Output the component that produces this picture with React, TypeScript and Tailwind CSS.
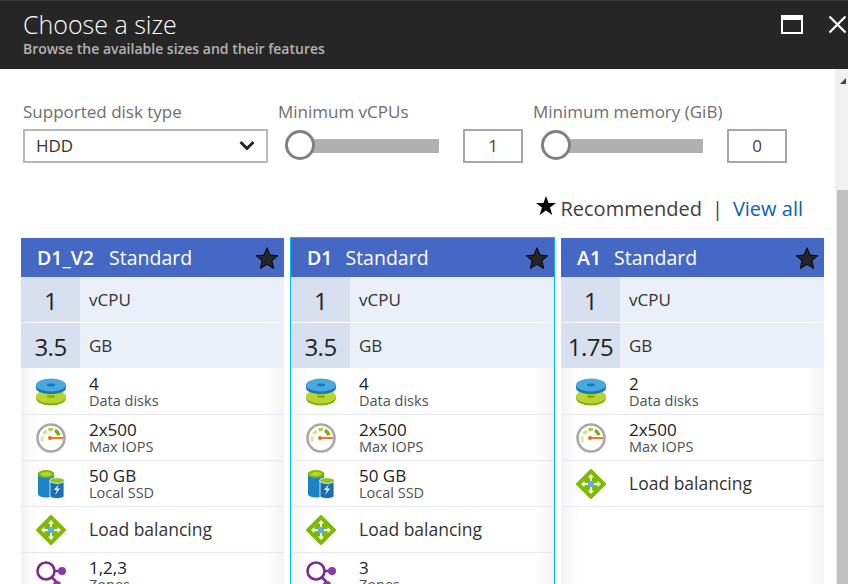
const font = { fontFamily: '"Open Sans", "Noto Sans", sans-serif' };

const DiskIcon = () => (
  <svg width="30" height="28" viewBox="0 0 30 28">
    <ellipse cx="15" cy="20" rx="15" ry="7.500" fill="#7fb000" />
    <ellipse cx="15" cy="18.500" rx="15" ry="7" fill="#b8d432" />
    <ellipse cx="15" cy="18.500" rx="4" ry="1.400" fill="#7fb000" />
    <path d="M0 7v3c0 3.500 6.700 6 15 6s15-2.500 15-6V7z" fill="#1277bd" />
    <ellipse cx="15" cy="7" rx="15" ry="6.500" fill="#4aa8dc" />
    <ellipse cx="15" cy="7" rx="4" ry="1.400" fill="#1277bd" />
  </svg>
);

const GaugeIcon = () => (
  <svg width="30" height="30" viewBox="0 0 30 30">
    <circle cx="15" cy="15" r="13.500" fill="#fff" stroke="#a8a8a8" strokeWidth="2.600" />
    <path d="M6.500 19a8.800 8.800 0 0 1 0-6" fill="none" stroke="#dcebb8" strokeWidth="3.400" />
    <path d="M7.500 11a8.800 8.800 0 0 1 3.500-3" fill="none" stroke="#cfe39a" strokeWidth="3.400" />
    <path d="M12.500 6.800a8.800 8.800 0 0 1 4.500-.2" fill="none" stroke="#a9cc4a" strokeWidth="3.400" />
    <path d="M19 7.200a8.800 8.800 0 0 1 4 5" fill="none" stroke="#7fa800" strokeWidth="3.400" />
    <path d="M13 15h14" stroke="#ea6c0c" strokeWidth="1.800" />
    <circle cx="14" cy="15" r="2" fill="#ea6c0c" />
  </svg>
);

const SsdIcon = () => (
  <svg width="30" height="30" viewBox="0 0 30 30">
    <path d="M2 5v20c0 2 4 3.500 8 3.500s8-1.500 8-3.500V5z" fill="#1c83c6" />
    <ellipse cx="10" cy="5" rx="8.500" ry="4" fill="#7fba00" />
    <ellipse cx="10" cy="5" rx="5.500" ry="2.200" fill="#b8d432" />
    <path d="M14 12h14v15c0 1.500-3 2.500-7 2.500s-7-1-7-2.500z" fill="#1a6fb3" stroke="#fff" strokeWidth="0.800" />
    <ellipse cx="21" cy="11.500" rx="7.500" ry="2.800" fill="#8fc31f" stroke="#fff" strokeWidth="0.800" />
    <path d="M23 15l-5 6h3l-2 5 5-6.500h-3z" fill="#fff" />
  </svg>
);

const BalanceIcon = () => (
  <svg width="30" height="30" viewBox="0 0 30 30">
    <path d="M15 1.500L28.500 15 15 28.500 1.500 15z" fill="#7fba00" stroke="#7fba00" strokeWidth="3" strokeLinejoin="round" />
    <path d="M15 5l3 3.500h-2v5h-2v-5h-2zM15 25l3-3.500h-2v-5h-2v5h-2zM5 15l3.500-3v2h5v2h-5v2zM25 15l-3.500-3v2h-5v2h5v2z" fill="#fff" />
    <circle cx="15" cy="15" r="3.200" fill="#59b4d9" />
  </svg>
);

const ZonesIcon = () => (
  <svg width="30" height="30" viewBox="0 0 30 30">
    <circle cx="10" cy="10" r="8.500" fill="#fff" stroke="#7a2a90" strokeWidth="2.600" />
    <path d="M18 10h6M15.500 16l6 6" stroke="#7a2a90" strokeWidth="2.600" />
    <circle cx="26" cy="10" r="4" fill="#8a3aa0" />
    <circle cx="21" cy="24" r="4" fill="#8a3aa0" />
  </svg>
);

const Star = () => (
  <svg width="24" height="24" viewBox="0 0 24 24" className="shrink-0">
    <path d="M12 1.800l3 7.300 7.800.6-6 5.100 1.900 7.600-6.700-4.100-6.700 4.100 1.900-7.600-6-5.100 7.800-.6z" fill="#262626" stroke="#000" strokeWidth="1" />
  </svg>
);

type Feature = { icon: React.ReactNode; value: string; label?: string };

type Size = { name: string; nameClass: string; cpu: string; mem: string; features: Feature[]; selected?: boolean };

const sizes: Size[] = [
  {
    name: "D1_V2",
    nameClass: "font-semibold mr-[15px]",
    cpu: "1",
    mem: "3.5",
    features: [
      { icon: <DiskIcon />, value: "4", label: "Data disks" },
      { icon: <GaugeIcon />, value: "2x500", label: "Max IOPS" },
      { icon: <SsdIcon />, value: "50 GB", label: "Local SSD" },
      { icon: <BalanceIcon />, value: "Load balancing" },
      { icon: <ZonesIcon />, value: "1,2,3", label: "Zones" },
    ],
  },
  {
    name: "D1",
    nameClass: "font-semibold mr-[13px]",
    cpu: "1",
    mem: "3.5",
    selected: true,
    features: [
      { icon: <DiskIcon />, value: "4", label: "Data disks" },
      { icon: <GaugeIcon />, value: "2x500", label: "Max IOPS" },
      { icon: <SsdIcon />, value: "50 GB", label: "Local SSD" },
      { icon: <BalanceIcon />, value: "Load balancing" },
      { icon: <ZonesIcon />, value: "3", label: "Zones" },
    ],
  },
  {
    name: "A1",
    nameClass: "font-semibold mr-[13px]",
    cpu: "1",
    mem: "1.75",
    features: [
      { icon: <DiskIcon />, value: "2", label: "Data disks" },
      { icon: <GaugeIcon />, value: "2x500", label: "Max IOPS" },
      { icon: <BalanceIcon />, value: "Load balancing" },
    ],
  },
];

const SpecRow = ({ value, unit }: { value: string; unit: string }) => (
  <div className="flex h-[45px] bg-[#eaeff8] mb-px">
    <div className="w-[59px] bg-[#d8e0f0] flex items-center justify-center pt-[2px] text-[24px] text-[#222] tracking-[-0.5px]">
      {value}
    </div>
    <div className="pl-[9px] pt-[11px] text-[17px] leading-[24px] text-[#333]">{unit}</div>
  </div>
);

const Card = ({ size }: { size: Size }) => (
  <div
    className={
      size.selected
        ? "w-[265px] border border-[#00bcf2] border-b-0 -mt-px bg-[linear-gradient(90deg,#f3f3f3,#fff_18px,#fff_calc(100%-18px),#f3f3f3)]"
        : "w-[263px] bg-[linear-gradient(90deg,#f3f3f3,#fff_18px,#fff_calc(100%-18px),#f3f3f3)]"
    }
  >
    <div className="h-[39px] bg-[#4668c5] flex items-center pl-4 pr-[5px] text-white text-[19.5px]">
      <span className={size.nameClass}>{size.name}</span>
      <span className="flex-1">Standard</span>
      <Star />
    </div>
    <SpecRow value={size.cpu} unit="vCPU" />
    <SpecRow value={size.mem} unit="GB" />
    {size.features.map((f) => (
      <div key={f.value + f.label} className="h-[46px] flex border-b border-[#e8e8f2]">
        <div className="w-[59px] pl-[15px] flex items-center shrink-0">{f.icon}</div>
        {f.label ? (
          <div className="pl-[9px] pt-[5px]">
            <div className="text-[17px] leading-[19px] text-[#222]">{f.value}</div>
            <div className="text-[14.5px] leading-[15px] text-[#505050]">{f.label}</div>
          </div>
        ) : (
          <div className="pl-[9px] pb-[1px] flex items-center text-[17.5px] text-[#333]">{f.value}</div>
        )}
      </div>
    ))}
  </div>
);

const Slider = ({ trackW, value }: { trackW: string; value: string }) => (
  <div className="flex items-center">
    <div className="relative h-[34px] flex items-center">
      <div className={"h-[14px] bg-[#b0b0b0] ml-[15px] " + trackW} />
      <div className="absolute left-0 top-[1px] w-[30px] h-[30px] rounded-full bg-white border-[3px] border-[#808080]" />
    </div>
    <div className="ml-6 w-[60px] h-[34px] border-2 border-[#a6a6a6] flex items-center justify-center pb-[1px] text-[17px] text-[#444]">
      {value}
    </div>
  </div>
);

export default function App() {
  return (
    <div className="h-[584px] w-[848px] overflow-hidden bg-white flex flex-col" style={font}>
      <header className="h-[69px] shrink-0 bg-[#262626] border-t border-[#3a3a3a] flex justify-between pl-[23px] pr-[1px]">
        <div>
          <h1 className="text-[25px] leading-[30px] mt-[8px] text-white font-light">Choose a size</h1>
          <p className="text-[14px] leading-[16px] mt-[2px] font-semibold text-[#b4b4b4]">
            Browse the available sizes and their features
          </p>
        </div>
        <div className="flex items-start pt-[14px] gap-[25px]">
          <div className="w-[22px] h-[19px] border-2 border-t-[5px] border-white" />
          <svg width="19" height="19" viewBox="0 0 19 19">
            <path d="M1.500 1.500l16 16M17.500 1.500l-16 16" stroke="#fff" strokeWidth="2.200" />
          </svg>
        </div>
      </header>

      <div className="flex flex-1 min-h-0">
        <main className="flex-1 min-w-0 overflow-hidden">
          <div className="flex pl-[23px] pt-[31px]">
            <div className="w-[245px]">
              <label className="block text-[17px] leading-[24px] mb-[5px] text-[#6e6e6e]">Supported disk type</label>
              <div className="h-[34px] border-2 border-[#b8b8b8] flex items-center justify-between pl-[11px] pr-[11px] pb-[1px] text-[17px] text-[#333]">
                HDD
                <svg width="16" height="11" viewBox="0 0 16 11">
                  <path d="M1.500 2l6.500 6.500L14.500 2" fill="none" stroke="#222" strokeWidth="2.800" />
                </svg>
              </div>
            </div>
            <div className="ml-[10px] w-[255px]">
              <label className="block text-[17px] leading-[24px] mb-[5px] text-[#6e6e6e] whitespace-nowrap">Minimum vCPUs</label>
              <div className="ml-[7px]">
                <Slider trackW="w-[139px]" value="1" />
              </div>
            </div>
            <div className="w-[254px]">
              <label className="block text-[17px] leading-[24px] mb-[5px] text-[#6e6e6e] whitespace-nowrap">Minimum memory (GiB)</label>
              <div className="ml-[8px]">
                <Slider trackW="w-[147px]" value="0" />
              </div>
            </div>
          </div>

          <div className="flex items-center justify-end mt-[30px] pr-[32px] h-[32px] text-[20px]">
            <svg width="20" height="20" viewBox="0 0 20 20" className="mr-[4px] -mt-[6px]">
              <path d="M10 0l2.600 7h7.400l-6 4.500 2.300 7.500L10 14.500 3.700 19 6 11.500 0 7h7.400z" fill="#000" />
            </svg>
            <span className="text-[#404040]">Recommended</span>
            <span className="mx-[10px] text-[#404040]">|</span>
            <span className="text-[#0a60b8]">View all</span>
          </div>

          <div className="flex gap-[6px] pl-[21px] mt-[13px]">
            {sizes.map((s) => (
              <Card key={s.name} size={s} />
            ))}
          </div>
        </main>

        <div className="w-[13px] shrink-0 bg-[#f0f0f0] relative">
          <div className="absolute top-[9px] right-[2px] w-0 h-0 border-l-[6px] border-l-transparent border-b-[6px] border-b-[#444]" />
          <div className="absolute top-[121px] bottom-0 left-[2px] right-0 bg-[#c0c0c0]" />
        </div>
      </div>
    </div>
  );
}
